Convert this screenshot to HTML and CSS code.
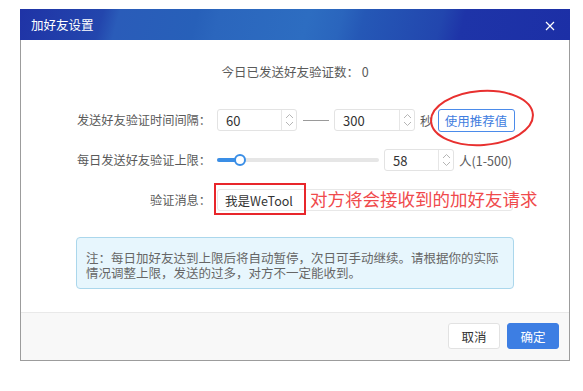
FILE: index.html
```html
<!DOCTYPE html>
<html lang="zh-CN">
<head>
  <meta charset="UTF-8" />
  <title>加好友设置</title>
  <link rel="stylesheet" href="styles.css">
</head>
<body>
  <div class="dialog">
    <div class="dialog-header">
      <span class="dialog-title">加好友设置</span>
      <svg class="close-icon" width="10" height="10" viewBox="0 0 10 10">
        <path d="M1 1 L9 9 M9 1 L1 9" stroke="#fff" stroke-width="1.2" fill="none"/>
      </svg>
    </div>

    <div class="dialog-body">
      <p class="today-count">今日已发送好友验证数： 0</p>

      <div class="form-row">
        <label class="form-label">发送好友验证时间间隔：</label>
        <div class="num-input w80">
          <span class="num-value">60</span>
          <span class="spinner">
            <svg width="9" height="6" viewBox="0 0 9 6"><path d="M1 5 L4.5 1.5 L8 5" stroke="#b5b5b5" fill="none"/></svg>
            <svg width="9" height="6" viewBox="0 0 9 6"><path d="M1 1 L4.5 4.5 L8 1" stroke="#b5b5b5" fill="none"/></svg>
          </span>
        </div>
        <span class="dash"></span>
        <div class="num-input w81">
          <span class="num-value">300</span>
          <span class="spinner">
            <svg width="9" height="6" viewBox="0 0 9 6"><path d="M1 5 L4.5 1.5 L8 5" stroke="#b5b5b5" fill="none"/></svg>
            <svg width="9" height="6" viewBox="0 0 9 6"><path d="M1 1 L4.5 4.5 L8 1" stroke="#b5b5b5" fill="none"/></svg>
          </span>
        </div>
        <span class="unit">秒</span>
        <button class="btn-outline">使用推荐值</button>
        <svg class="mark-ellipse" width="112" height="62" viewBox="0 0 112 62">
          <ellipse cx="55" cy="31" rx="51" ry="27" transform="rotate(-4 55 31)" stroke="#e8302f" stroke-width="2" fill="none"/>
        </svg>
      </div>

      <div class="form-row">
        <label class="form-label">每日发送好友验证上限：</label>
        <div class="slider">
          <div class="slider-fill"></div>
          <div class="slider-thumb"></div>
        </div>
        <div class="num-input w70">
          <span class="num-value">58</span>
          <span class="spinner">
            <svg width="9" height="6" viewBox="0 0 9 6"><path d="M1 5 L4.5 1.5 L8 5" stroke="#b5b5b5" fill="none"/></svg>
            <svg width="9" height="6" viewBox="0 0 9 6"><path d="M1 1 L4.5 4.5 L8 1" stroke="#b5b5b5" fill="none"/></svg>
          </span>
        </div>
        <span class="unit">人(1-500)</span>
      </div>

      <div class="form-row">
        <label class="form-label">验证消息：</label>
        <div class="text-input">
          <span class="num-value msg">我是WeTool</span>
          <span class="mark-box"></span>
          <span class="mark-text">对方将会接收到的加好友请求</span>
        </div>
      </div>

      <div class="note">
        注：每日加好友达到上限后将自动暂停，次日可手动继续。请根据你的实际情况调整上限，发送的过多，对方不一定能收到。
      </div>
    </div>

    <div class="dialog-footer">
      <button class="btn">取消</button>
      <button class="btn btn-primary">确定</button>
    </div>
  </div>
</body>
</html>
```

FILE: styles.css
```css
* {
  margin: 0;
  padding: 0;
  box-sizing: border-box;
  font-family: "Noto Sans CJK SC", "Noto Sans", sans-serif;
}

body {
  background: #ffffff;
  color: #5a5a5a;
  font-size: 12.5px;
}

.dialog {
  margin: 9px 0 0 20px;
  width: 550px;
  border: 1px solid #9c9c9c;
  border-top: 0;
  background: #fff;
}

.dialog-header {
  height: 31px;
  margin: 0 -1px;
  display: flex;
  align-items: center;
  justify-content: space-between;
  padding: 0 15px 0 11px;
  background: linear-gradient(105deg, #1f33a6 0%, #2346ad 15%, #2a5cb9 18%, #2760b9 32%, #2b66bd 36%, #2d6dc1 52%, #2a65bd 58%, #2558b6 62%, #2246ae 76%, #1e34a8 80%, #1c2fa6 100%);
}

.dialog-title {
  color: #fff;
  font-size: 12.5px;
}

.close-icon {
  margin-top: 3px;
}

.dialog-body {
  position: relative;
  height: 272px;
  padding-top: 23px;
}

.today-count {
  text-align: center;
  line-height: 18px;
  margin-bottom: 28px;
}

.form-row {
  position: relative;
  display: flex;
  align-items: center;
  height: 22px;
  margin-bottom: 18px;
}

.form-label {
  width: 190px;
  text-align: right;
  margin-right: 6px;
  white-space: nowrap;
  font-size: 12.2px;
}

.num-input {
  position: relative;
  display: flex;
  align-items: center;
  height: 22px;
  border: 1px solid #e3e3e3;
  border-radius: 3px;
  background: #fff;
}

.w80 { width: 80px; }
.w81 { width: 81px; }
.w70 { width: 70px; }

.num-value {
  flex: 1;
  padding-left: 8px;
  color: #333;
  font-size: 13px;
}

.num-value.msg {
  font-size: 12.5px;
  padding-left: 7px;
}

.spinner {
  width: 15px;
  height: 100%;
  border-left: 1px solid #e6e6e6;
  display: flex;
  flex-direction: column;
  align-items: center;
  justify-content: space-around;
  padding: 2px 0;
}

.spinner svg {
  display: block;
}

.dash {
  width: 26px;
  height: 1px;
  background: #9a9a9a;
  margin: 0 5px 0 6px;
}

.unit {
  margin-left: 5px;
}

.btn-outline {
  margin-left: 5px;
  width: 77px;
  height: 23px;
  border: 1px solid #4b8bea;
  border-radius: 3px;
  background: #fff;
  color: #3f7de0;
  font-size: 12.5px;
}

.mark-ellipse {
  position: absolute;
  left: 406px;
  top: -22px;
}

.slider {
  position: relative;
  width: 162px;
  height: 4px;
  background: #e6e6e6;
  border-radius: 2px;
  margin-right: 5px;
}

.slider-fill {
  width: 23px;
  height: 4px;
  background: #3a8ee6;
  border-radius: 2px;
}

.slider-thumb {
  position: absolute;
  left: 17px;
  top: -4px;
  width: 12px;
  height: 12px;
  border: 2px solid #3a8ee6;
  border-radius: 50%;
  background: #fff;
}

.text-input {
  position: relative;
  display: flex;
  align-items: center;
  width: 296px;
  height: 22px;
  border: 1px solid #e8e8e8;
  border-radius: 3px;
}

.mark-box {
  position: absolute;
  left: -4px;
  top: -7px;
  width: 92px;
  height: 32px;
  border: 2px solid #e8262b;
}

.mark-text {
  position: absolute;
  left: 92px;
  top: -3px;
  color: #f04a4c;
  font-size: 17.5px;
  line-height: 24px;
  white-space: nowrap;
}

.note {
  margin: 26px 55px 0 55px;
  padding: 12px 14px 8px 9px;
  background: #e7f6fd;
  border: 1px solid #abd7ec;
  border-radius: 4px;
  color: #666;
  line-height: 15px;
}

.dialog-footer {
  display: flex;
  justify-content: flex-end;
  gap: 7px;
  height: 48px;
  padding: 10px 10px 0 0;
  border-top: 1px solid #e9e9e9;
  background: #f8f8f8;
}

.btn {
  width: 52px;
  height: 26px;
  border: 1px solid #e2e2e2;
  border-radius: 3px;
  background: #fff;
  color: #333;
  font-size: 12.5px;
}

.btn-primary {
  background: #3d7ee3;
  border-color: #3d7ee3;
  color: #fff;
}
```
